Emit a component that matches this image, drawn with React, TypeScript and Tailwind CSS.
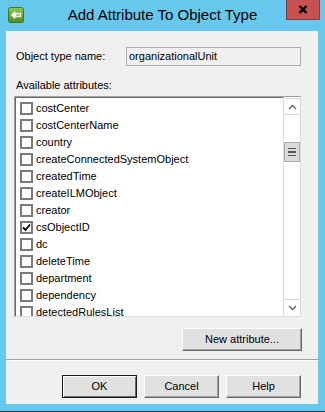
import React from "react";

const attributes = [
  "costCenter",
  "costCenterName",
  "country",
  "createConnectedSystemObject",
  "createdTime",
  "createILMObject",
  "creator",
  "csObjectID",
  "dc",
  "deleteTime",
  "department",
  "dependency",
  "detectedRulesList",
];

const AppIcon = () => (
  <svg width="16" height="16" viewBox="0 0 16 16">
    <defs>
      <linearGradient id="g" x1="0" y1="0" x2="0" y2="1">
        <stop offset="0" stopColor="#8fc855" />
        <stop offset="1" stopColor="#4f8c22" />
      </linearGradient>
    </defs>
    <rect x="0.5" y="0.5" width="15" height="15" rx="2" fill="url(#g)" stroke="#3f7a1c" />
    <path d="M3 8 L7 4 V6 H13 V10 H7 V12 Z" fill="#ffffff" stroke="#e8f5d8" strokeWidth="0.5" />
    <path d="M8 7.3 H12 M8 8.7 H12" stroke="#7fb64a" strokeWidth="0.8" />
  </svg>
);

const Btn = ({ label, w, primary }: { label: string; w: string; primary?: boolean }) => (
  <button
    className={`${w} h-[23px] bg-[#e1e1e1] text-[11px] text-black border ${
      primary
        ? "border-[#1a1a1a] shadow-[inset_1px_1px_0_#ffffff,inset_-1px_-1px_0_#696969]"
        : "border-t-white border-l-white border-r-[#696969] border-b-[#696969] shadow-[inset_-1px_-1px_0_#a0a0a0]"
    }`}
  >
    {label}
  </button>
);

const Checkbox = ({ checked }: { checked?: boolean }) => (
  <span className="flex h-[13px] w-[13px] shrink-0 items-center justify-center bg-white border-2 border-[#7a7a7a]">
    {checked && (
      <svg width="9" height="9" viewBox="0 0 9 9">
        <path d="M1 4.5 L3.5 7 L8 1.5" fill="none" stroke="#000" strokeWidth="1.8" />
      </svg>
    )}
  </span>
);

export default function App() {
  return (
    <div
      className="flex h-[412px] w-[325px] flex-col border-b border-[#1f3f4c] bg-[#66c8ec] text-black"
      style={{ fontFamily: '"Liberation Sans", Arial, sans-serif' }}
    >
      {/* title bar */}
      <div className="grid h-[31px] shrink-0 grid-cols-[1fr_auto_1fr]">
        <div className="pl-[8px] pt-[7px]">
          <AppIcon />
        </div>
        <div className="mt-[6px] text-[15px] leading-[18px] text-black">Add Attribute To Object Type</div>
        <div className="flex justify-end pr-[5px]">
          <div className="flex h-[20px] w-[34px] items-center justify-center border-x border-b border-[#8c3a3a] bg-[#c75050]">
            <svg width="10" height="9" viewBox="0 0 10 9">
              <path d="M1.5 1 L8.5 8 M8.5 1 L1.5 8" stroke="#000" strokeWidth="2.4" />
            </svg>
          </div>
        </div>
      </div>

      {/* client area */}
      <div className="ml-[6px] mr-[7px] flex h-[373px] flex-col bg-[#f0f0f0] text-[11px]">
        <div className="flex items-center pl-[10px] pt-[16px]">
          <span className="w-[110px] leading-[13px]">Object type name:</span>
          <div className="flex h-[19px] w-[175px] items-center border border-[#acacac] bg-[#f0f0f0] pl-[2px]">
            organizationalUnit
          </div>
        </div>

        <div className="mt-[13px] pl-[10px] leading-[13px]">Available attributes:</div>

        <div className="ml-[8px] mt-[4px] flex h-[221px] w-[287px] border border-[#a0a0a0] border-r-[#dcdcdc] border-b-[#dcdcdc] bg-white shadow-[inset_1px_1px_0_#696969]">
          <div className="flex flex-1 flex-col overflow-hidden pl-[5px] pt-[3px]">
            {attributes.map((a) => (
              <div key={a} className="flex h-[17px] shrink-0 items-center">
                <Checkbox checked={a === "csObjectID"} />
                <span className="ml-[3px] whitespace-nowrap leading-[13px]">{a}</span>
              </div>
            ))}
          </div>
          <div className="flex w-[17px] flex-col border-l border-[#d9d9d9] bg-white pt-[1px]">
            <div className="flex h-[17px] items-center justify-center border-y border-[#d9d9d9]">
              <svg width="9" height="6" viewBox="0 0 9 6">
                <path d="M1 5 L4.5 1.5 L8 5" fill="none" stroke="#606060" strokeWidth="1.4" />
              </svg>
            </div>
            <div className="flex-1">
              <div className="mt-[27px] flex h-[20px] flex-col items-center justify-center gap-[2px] border border-[#adadad] bg-[#dadada]">
                <span className="h-[1.5px] w-[8px] bg-[#555]" />
                <span className="h-[1.5px] w-[8px] bg-[#555]" />
                <span className="h-[1.5px] w-[8px] bg-[#555]" />
              </div>
            </div>
            <div className="flex h-[17px] items-center justify-center border-t border-[#d9d9d9]">
              <svg width="9" height="6" viewBox="0 0 9 6">
                <path d="M1 1 L4.5 4.5 L8 1" fill="none" stroke="#606060" strokeWidth="1.4" />
              </svg>
            </div>
          </div>
        </div>

        <div className="mt-[11px] flex justify-end pr-[16px]">
          <Btn label="New attribute..." w="w-[120px]" />
        </div>

        <div className="mt-[8px] h-[2px] border-t border-[#a0a0a0] bg-white" />

        <div className="mt-[14px] flex justify-end gap-[7px] pr-[17px]">
          <Btn label="OK" w="w-[75px]" primary />
          <Btn label="Cancel" w="w-[75px]" />
          <Btn label="Help" w="w-[75px]" />
        </div>
      </div>
    </div>
  );
}
